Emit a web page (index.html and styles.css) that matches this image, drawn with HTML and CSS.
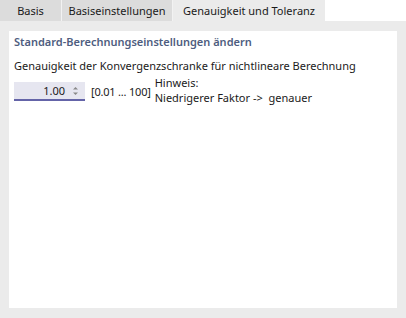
FILE: index.html
```html
<!DOCTYPE html>
<html>

<head>
  <meta charset="utf-8">
  <link rel="stylesheet" href="styles.css">
</head>

<body>
  <div id="tabs">
    <div class="tab">Basis</div>
    <div class="tab">Basiseinstellungen</div>
    <div class="tab active">Genauigkeit und Toleranz</div>
  </div>
  <div id="content">
    <div id="panel">
      <div class="panelTitle">Standard-Berechnungseinstellungen ändern</div>
      <div class="label">Genauigkeit der Konvergenzschranke für nichtlineare Berechnung</div>
      <div class="row">
        <div class="spin">
          <span class="value">1.00</span>
          <span class="arrows">
            <svg width="7" height="12" viewBox="0 0 7 12">
              <path d="M1 4.5 L3.5 2 L6 4.5 Z" fill="#888"/>
              <path d="M1 7.5 L3.5 10 L6 7.5 Z" fill="#888"/>
            </svg>
          </span>
        </div>
        <div class="range">[0.01 ... 100]</div>
        <div class="hint">Hinweis:<br>Niedrigerer Faktor -&gt;&nbsp; genauer</div>
      </div>
    </div>
  </div>
</body>

</html>
```

FILE: styles.css
```css
html,
body {
  margin: 0;
  width: 406px;
  height: 318px;
  overflow: hidden;
  font-family: "Noto Sans", sans-serif;
  font-size: 11px;
  color: #1a1a1a;
  background-color: #ebebeb;
}

#tabs {
  display: flex;
  height: 21px;
  background-color: #fff;
}

.tab {
  box-sizing: border-box;
  height: 21px;
  line-height: 21px;
  background-color: #dcdcdc;
  border-right: 1px solid #f2f2f2;
  text-align: center;
}

.tab:nth-child(1) {
  width: 62px;
}

.tab:nth-child(2) {
  width: 111px;
}

.tab.active {
  width: 152px;
  background-color: #ebebeb;
  border-right: 0;
}

#content {
  padding: 10px 9px 10px 9px;
}

#panel {
  background-color: #fff;
  height: 277px;
  padding: 2px 5px;
  box-sizing: border-box;
}

.panelTitle {
  color: #4e5d80;
  font-weight: 600;
  line-height: 18px;
}

.label {
  margin-top: 7px;
  line-height: 16px;
}

.row {
  display: flex;
  margin-top: 1px;
}

.spin {
  width: 71px;
  height: 19px;
  margin-top: 7px;
  box-sizing: border-box;
  background-color: #e6e6f0;
  border-bottom: 2px solid #6464a8;
  display: flex;
  align-items: center;
  justify-content: flex-end;
}

.value {
  line-height: 16px;
}

.arrows {
  display: flex;
  width: 19px;
  justify-content: center;
  padding-left: 1px;
}

.range {
  margin-left: 6px;
  margin-top: 7px;
  line-height: 19px;
  letter-spacing: -0.2px;
}

.hint {
  margin-left: 4px;
  line-height: 15px;
}
```
